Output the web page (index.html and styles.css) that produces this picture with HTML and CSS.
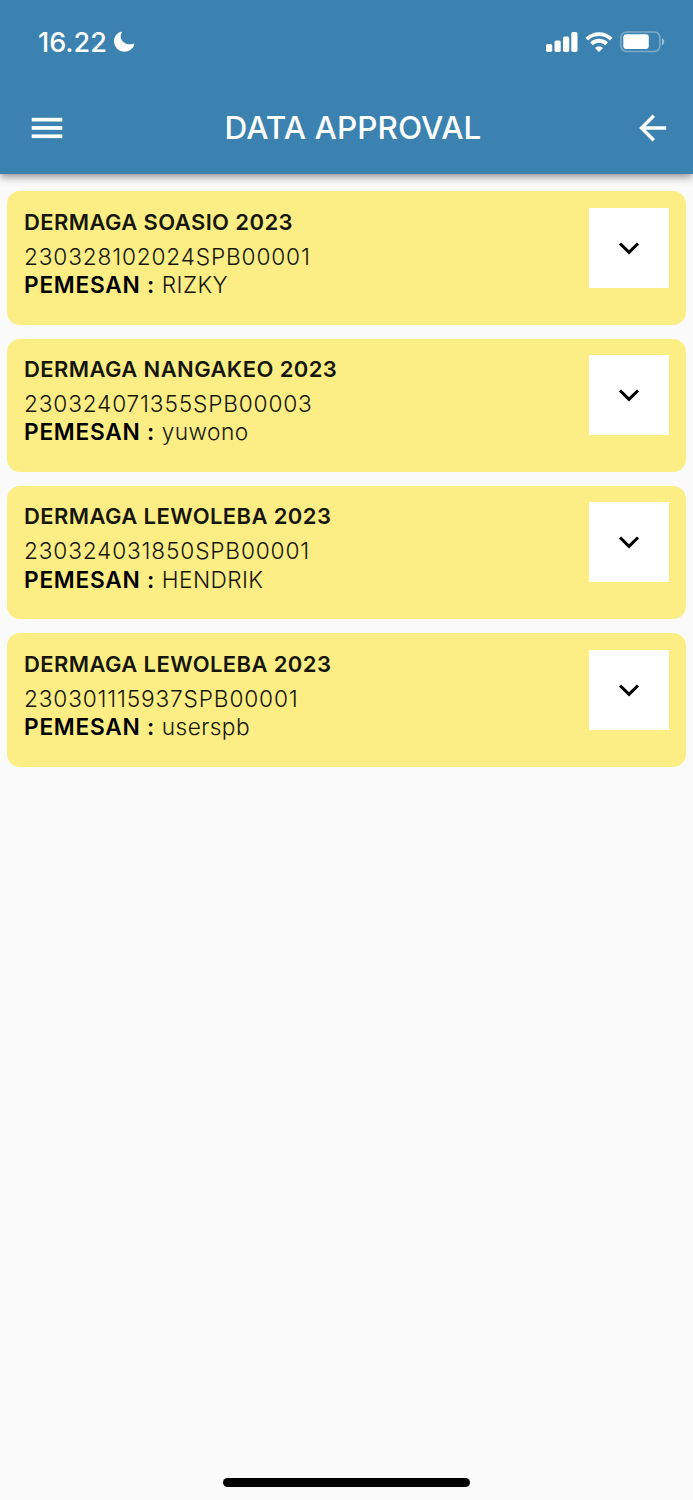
FILE: index.html
```html
<!DOCTYPE html>
<html lang="id">
<head>
  <meta charset="UTF-8">
  <meta name="viewport" content="width=device-width, initial-scale=1.0">
  <title>Data Approval</title>
  <link rel="stylesheet" href="styles.css">
</head>
<body>
<header class="header">
  <!-- Status bar -->
  <div class="status-bar">
    <div class="status-left">
      <span class="time">16.22</span>
      <svg class="moon" width="22" height="22" viewBox="0 0 22 22"><path d="M8.2 .8C3.8 2 1 5.800 1 10.500a10.300 10.300 0 0 0 10.300 10.300c4.700 0 8.900-3 10-7.200.2-.8-.3-1.200-1-.9C14 15 7.200 11 7.700 4.300c.1-1 .6-1.900 1.100-2.700.3-.5 0-1-.6-.8z" fill="#fff"/></svg>
    </div>
    <div class="status-right">
      <svg width="32" height="20" viewBox="0 0 32 20" fill="#fff">
        <rect x="0" y="12" width="6.200" height="8" rx="1.700"/>
        <rect x="8.500" y="8.500" width="6.200" height="11.500" rx="1.700"/>
        <rect x="17" y="4.500" width="6.200" height="15.500" rx="1.700"/>
        <rect x="25.300" y="0" width="6.200" height="20" rx="1.700"/>
      </svg>
      <svg width="28" height="20" viewBox="0 0 28 20">
        <g fill="none" stroke="#fff" stroke-width="3.800">
          <path d="M1.800 7.100a17.300 17.300 0 0 1 24.400 0"/>
          <path d="M6.400 11.900a10.800 10.800 0 0 1 15.200 0"/>
        </g>
        <path d="M14 20l-4-4a5.600 5.600 0 0 1 8 0z" fill="#fff"/>
      </svg>
      <svg width="46" height="22" viewBox="0 0 46 22">
        <rect x=".9" y=".9" width="39" height="19.600" rx="5.500" fill="none" stroke="#fff" stroke-opacity=".35" stroke-width="1.500"/>
        <rect x="3.300" y="3.300" width="25.500" height="14.800" rx="3" fill="#fff"/>
        <path d="M42 7.200c1.300.6 2.200 1.900 2.200 3.500s-.9 2.900-2.200 3.500z" fill="#fff" fill-opacity=".5"/>
      </svg>
    </div>
  </div>

  <!-- App bar -->
  <div class="app-bar">
    <button class="icon-button" aria-label="Menu">
      <svg width="32" height="22" viewBox="0 0 32 22" fill="#fff">
        <rect x=".7" y=".8" width="30.600" height="3.700"/>
        <rect x=".7" y="9.100" width="30.600" height="3.700"/>
        <rect x=".7" y="17.400" width="30.600" height="3.700"/>
      </svg>
    </button>
    <h1 class="title">DATA APPROVAL</h1>
    <button class="icon-button" aria-label="Kembali">
      <svg width="28" height="28" viewBox="0 0 28 28" fill="none" stroke="#fff" stroke-width="3.400"><path d="M27.200 14H3.300M14.800 1.800L2.500 14l12.300 12.200"/></svg>
    </button>
  </div>
</header>

<main class="list">
  <div class="card">
    <div class="info">
      <h2 class="project">DERMAGA SOASIO 2023</h2>
      <p class="number">230328102024SPB00001</p>
      <p class="orderer"><b>PEMESAN :</b> RIZKY</p>
    </div>
    <button class="expand" aria-label="Detail">
      <svg width="22" height="14" viewBox="0 0 22 14"><path d="M2 2.500l9 8.900 9-8.900" fill="none" stroke="#000" stroke-width="3.100"/></svg>
    </button>
  </div>
  <div class="card">
    <div class="info">
      <h2 class="project">DERMAGA NANGAKEO 2023</h2>
      <p class="number">230324071355SPB00003</p>
      <p class="orderer"><b>PEMESAN :</b> yuwono</p>
    </div>
    <button class="expand" aria-label="Detail">
      <svg width="22" height="14" viewBox="0 0 22 14"><path d="M2 2.500l9 8.900 9-8.900" fill="none" stroke="#000" stroke-width="3.100"/></svg>
    </button>
  </div>
  <div class="card">
    <div class="info">
      <h2 class="project">DERMAGA LEWOLEBA 2023</h2>
      <p class="number">230324031850SPB00001</p>
      <p class="orderer"><b>PEMESAN :</b> HENDRIK</p>
    </div>
    <button class="expand" aria-label="Detail">
      <svg width="22" height="14" viewBox="0 0 22 14"><path d="M2 2.500l9 8.900 9-8.900" fill="none" stroke="#000" stroke-width="3.100"/></svg>
    </button>
  </div>
  <div class="card">
    <div class="info">
      <h2 class="project">DERMAGA LEWOLEBA 2023</h2>
      <p class="number">230301115937SPB00001</p>
      <p class="orderer"><b>PEMESAN :</b> userspb</p>
    </div>
    <button class="expand" aria-label="Detail">
      <svg width="22" height="14" viewBox="0 0 22 14"><path d="M2 2.500l9 8.900 9-8.900" fill="none" stroke="#000" stroke-width="3.100"/></svg>
    </button>
  </div>
</main>

<footer class="home-bar">
  <div class="home-indicator"></div>
</footer>
</body>
</html>
```
FILE: styles.css
```css
* {
  box-sizing: border-box;
}
body {
  margin: 0;
  height: 1500px;
  display: flex;
  flex-direction: column;
  font-family: Inter, "Liberation Sans", sans-serif;
  background-color: #fafafa;
  overflow: hidden;
}
h1, h2, p {
  margin: 0;
}
svg {
  display: block;
}
button {
  padding: 0;
  border: none;
  cursor: pointer;
}

/* Header */
.header {
  height: 174px;
  background-color: #3b82b0;
  color: #fff;
  box-shadow: 0 3px 8px rgba(0, 0, 0, 0.42);
}
.status-bar {
  height: 83px;
  padding: 1px 27px 0 38px;
  display: flex;
  align-items: center;
  justify-content: space-between;
}
.status-left {
  display: flex;
  align-items: center;
  gap: 6px;
}
.time {
  font-size: 27px;
  font-weight: 500;
}
.status-right {
  display: flex;
  align-items: center;
  gap: 7px;
}
.app-bar {
  height: 89px;
  padding: 0 26px 0 31px;
  display: flex;
  align-items: center;
  justify-content: space-between;
}
.icon-button {
  background: none;
}
.title {
  padding-left: 4px;
  font-size: 31.5px;
  font-weight: 500;
  letter-spacing: 0.05px;
}

/* Approval cards */
.list {
  flex: 1;
  padding: 17.200px 7px 0;
  display: flex;
  flex-direction: column;
  gap: 14px;
}
.card {
  height: 133.400px;
  padding: 16.500px 17px 0;
  display: flex;
  justify-content: space-between;
  align-items: flex-start;
  background-color: #fcee85;
  border-radius: 13px;
}
.project {
  margin-bottom: 6.900px;
  font-size: 22px;
  font-weight: 600;
  line-height: 28px;
  letter-spacing: 0.4px;
  color: #16160c;
}
.number, .orderer {
  font-size: 22.700px;
  font-weight: 330;
  line-height: 28.300px;
  color: #16160c;
}
.number {
  letter-spacing: 0.82px;
}
.orderer {
  letter-spacing: 0.4px;
}
.orderer b {
  font-weight: 600;
  letter-spacing: 0.75px;
  color: #000;
}
.expand {
  width: 80px;
  height: 80px;
  display: flex;
  align-items: center;
  justify-content: center;
  background-color: #fff;
}

/* Home indicator */
.home-bar {
  height: 22px;
  display: flex;
  justify-content: center;
}
.home-indicator {
  width: 247px;
  height: 8.500px;
  border-radius: 5px;
  background-color: #000;
}
```
